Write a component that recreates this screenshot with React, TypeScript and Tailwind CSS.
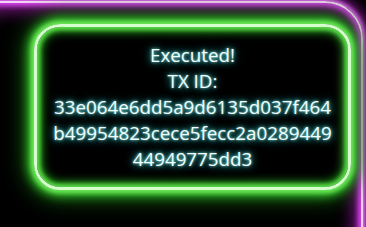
export default function App() {
  return (
    <div className="relative h-[227px] w-[366px] overflow-hidden bg-black">
      <div className="-ml-[40px] mt-[1px] h-[320px] w-[403px] rounded-[38px] border-2 border-[#f6d0f6] pl-[72px] pt-[21px] shadow-[0_0_4px_2px_#e879f9,0_0_14px_5px_#a21caf,inset_0_0_5px_3px_#d946ef,inset_0_0_18px_7px_#86198f]">
        <div
          className="flex h-[166px] w-[317px] flex-col items-center justify-center rounded-[26px] border-[3px] border-[#d4ffcc] pb-[1px] text-center text-[18.8px] leading-[26px] text-[#f0ffff] shadow-[0_0_4px_3px_#6ee75a,0_0_10px_6px_#34c02a,0_0_22px_8px_#176d10,inset_0_0_4px_3px_#5fdc4c,inset_0_0_10px_5px_#1f9a16]"
          style={{
            fontFamily: '"Open Sans", "Noto Sans", sans-serif',
            textShadow: "0 0 3px #8ee8e8, 0 0 7px #35b5b5, 0 0 12px #1a7a7a",
          }}
        >
          <div>Executed!</div>
          <div>TX ID:</div>
          <div>33e064e6dd5a9d6135d037f464</div>
          <div>b49954823cece5fecc2a0289449</div>
          <div>44949775dd3</div>
        </div>
      </div>
    </div>
  )
}
